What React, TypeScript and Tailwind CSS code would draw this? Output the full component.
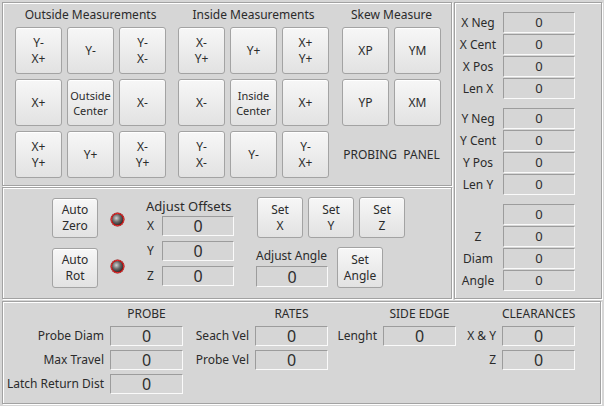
import React from "react";

const font = "font-['Noto_Sans',sans-serif]";

function Btn({ lines, size, small }: { lines: string[]; size: string; small?: boolean }) {
  return (
    <button
      className={`flex shrink-0 flex-col items-center justify-center rounded-[3px] border border-[#a3a3a3] bg-linear-to-b from-[#f7f7f7] to-[#e2e2e2] text-[#2b2b2b] shadow-[inset_0_1px_0_#ffffff] ${
        small ? "text-[11px] leading-[15px]" : "text-[12px] leading-[16px]"
      } ${size}`}
    >
      {lines.map((l, i) => (
        <span key={i}>{l}</span>
      ))}
    </button>
  );
}

function Box({ size, text }: { size: string; text: string }) {
  return (
    <div
      className={`flex shrink-0 items-center justify-center border border-t-[#9c9c9c] border-l-[#9c9c9c] border-b-[#fafafa] border-r-[#fafafa] bg-[#d6d6d6] text-[#2e2e2e] ${size} ${text}`}
    >
      0
    </div>
  );
}

function Led() {
  return (
    <div className="h-[13px] w-[13px] rounded-full border border-[#e00000] bg-[radial-gradient(circle_at_40%_38%,#d0d0d0_0%,#6a6a6a_40%,#1e1e1e_85%)] shadow-[0_0_0_0.5px_#900000]" />
  );
}

const frame =
  "border border-[#a2a2a2] shadow-[inset_1px_1px_0_#ffffff,1px_1px_0_#ffffff]";

const btn47 = "w-[47px] h-[47px]";

function Group({ title, rows }: { title: string; rows: React.ReactNode[][] }) {
  return (
    <div className="flex flex-col items-center">
      <div className="mb-[4px] h-[16px] text-[12px] leading-[16px]">{title}</div>
      <div className="flex flex-col gap-[5px]">
        {rows.map((r, i) => (
          <div key={i} className="flex gap-[5px]">
            {r}
          </div>
        ))}
      </div>
    </div>
  );
}

function TopPanel() {
  return (
    <div className={`${frame} h-[184px] pl-[12px] pt-[4px] flex gap-[12px]`}>
      <Group
        title="Outside Measurements"
        rows={[
          [<Btn key="a" lines={["Y-", "X+"]} size={btn47} />, <Btn key="b" lines={["Y-"]} size={btn47} />, <Btn key="c" lines={["Y-", "X-"]} size={btn47} />],
          [<Btn key="a" lines={["X+"]} size={btn47} />, <Btn key="b" lines={["Outside", "Center"]} size={btn47} small />, <Btn key="c" lines={["X-"]} size={btn47} />],
          [<Btn key="a" lines={["X+", "Y+"]} size={btn47} />, <Btn key="b" lines={["Y+"]} size={btn47} />, <Btn key="c" lines={["X-", "Y+"]} size={btn47} />],
        ]}
      />
      <Group
        title="Inside Measurements"
        rows={[
          [<Btn key="a" lines={["X-", "Y+"]} size={btn47} />, <Btn key="b" lines={["Y+"]} size={btn47} />, <Btn key="c" lines={["X+", "Y+"]} size={btn47} />],
          [<Btn key="a" lines={["X-"]} size={btn47} />, <Btn key="b" lines={["Inside", "Center"]} size={btn47} small />, <Btn key="c" lines={["X+"]} size={btn47} />],
          [<Btn key="a" lines={["Y-", "X-"]} size={btn47} />, <Btn key="b" lines={["Y-"]} size={btn47} />, <Btn key="c" lines={["Y-", "X+"]} size={btn47} />],
        ]}
      />
      <div className="ml-[1px]">
        <Group
          title="Skew Measure"
          rows={[
            [<Btn key="a" lines={["XP"]} size={btn47} />, <Btn key="b" lines={["YM"]} size={btn47} />],
            [<Btn key="a" lines={["YP"]} size={btn47} />, <Btn key="b" lines={["XM"]} size={btn47} />],
            [
              <div key="p" className="flex h-[47px] w-[99px] items-center justify-center whitespace-pre text-[12px]">
                {"PROBING  PANEL"}
              </div>,
            ],
          ]}
        />
      </div>
    </div>
  );
}

function MiddlePanel() {
  const btn46 = "w-[46px] h-[40px]";
  const setBtn = "w-[46px] h-[41px]";
  return (
    <div className={`${frame} h-[112px] pl-[49px] pt-[10px] flex items-start`}>
      <div className="flex flex-col gap-[10px]">
        <Btn lines={["Auto", "Zero"]} size={btn46} />
        <Btn lines={["Auto", "Rot"]} size={btn46} />
      </div>
      <div className="ml-[13px] mt-[15px] flex flex-col gap-[34px]">
        <Led />
        <Led />
      </div>
      <div className="ml-[22px] mt-[-1px] flex flex-col">
        <div className="h-[18px] text-[13px] leading-[18px]">Adjust Offsets</div>
        <div className="mt-[1px] flex flex-col gap-[5px]">
          {["X", "Y", "Z"].map((l) => (
            <div key={l} className="flex items-center">
              <div className="w-[16px] pl-[1px] text-[12px]">{l}</div>
              <Box size="w-[72px] h-[20px]" text="text-[16px]" />
            </div>
          ))}
        </div>
      </div>
      <div className="ml-[22px] mt-[-1px] flex flex-col">
        <div className="ml-[1px] flex gap-[5px]">
          <Btn lines={["Set", "X"]} size={setBtn} />
          <Btn lines={["Set", "Y"]} size={setBtn} />
          <Btn lines={["Set", "Z"]} size={setBtn} />
        </div>
        <div className="mt-[9px] flex items-start">
          <div className="mt-[1px] flex flex-col">
            <div className="h-[16px] text-[12px] leading-[16px]">Adjust Angle</div>
            <div className="mt-[2px]">
              <Box size="w-[72px] h-[21px]" text="text-[16px]" />
            </div>
          </div>
          <div className="ml-[9px]">
            <Btn lines={["Set", "Angle"]} size={setBtn} />
          </div>
        </div>
      </div>
    </div>
  );
}

function RightPanel() {
  const groups = [
    ["X Neg", "X Cent", "X Pos", "Len X"],
    ["Y Neg", "Y Cent", "Y Pos", "Len Y"],
    ["", "Z", "Diam", "Angle"],
  ];
  return (
    <div className={`${frame} h-[297px] w-[148px] pt-[9px] flex flex-col gap-[9px]`}>
      {groups.map((g, gi) => (
        <div key={gi} className="flex flex-col gap-[1px]">
          {g.map((l, i) => (
            <div key={i} className="flex items-center">
              <div className="w-[46px] text-center text-[12px]">{l}</div>
              <div className="ml-[2px]">
                <Box size="w-[72px] h-[21px]" text="text-[13px]" />
              </div>
            </div>
          ))}
        </div>
      ))}
    </div>
  );
}

function BottomGroup({ title, labelW, labels }: { title: string; labelW: string; labels: string[] }) {
  return (
    <div className="flex flex-col">
      <div className="mb-[4px] flex h-[16px]">
        <div className={labelW} />
        <div className="w-[73px] text-center text-[12px] leading-[16px]">{title}</div>
      </div>
      <div className="flex flex-col gap-[4px]">
        {labels.map((l) => (
          <div key={l} className="flex items-center">
            <div className={`${labelW} pr-[6px] text-right text-[12px] whitespace-nowrap`}>{l}</div>
            <Box size="w-[73px] h-[20px]" text="text-[16px]" />
          </div>
        ))}
      </div>
    </div>
  );
}

function BottomPanel() {
  return (
    <div className={`${frame} h-[105px] w-[599px] pt-[4px] flex`}>
      <BottomGroup title="PROBE" labelW="w-[107px]" labels={["Probe Diam", "Max Travel", "Latch Return Dist"]} />
      <BottomGroup title="RATES" labelW="w-[72px]" labels={["Seach Vel", "Probe Vel"]} />
      <BottomGroup title="SIDE EDGE" labelW="w-[55px]" labels={["Lenght"]} />
      <BottomGroup title="CLEARANCES" labelW="w-[46px]" labels={["X & Y", "Z"]} />
    </div>
  );
}

export default function App() {
  return (
    <div className={`${font} h-[406px] w-[604px] bg-[#d6d6d6] p-[2px] text-[#2b2b2b] flex flex-col gap-[2px]`}>
      <div className="flex gap-[2px]">
        <div className="flex w-[450px] flex-col gap-[1px]">
          <TopPanel />
          <MiddlePanel />
        </div>
        <RightPanel />
      </div>
      <BottomPanel />
    </div>
  );
}
